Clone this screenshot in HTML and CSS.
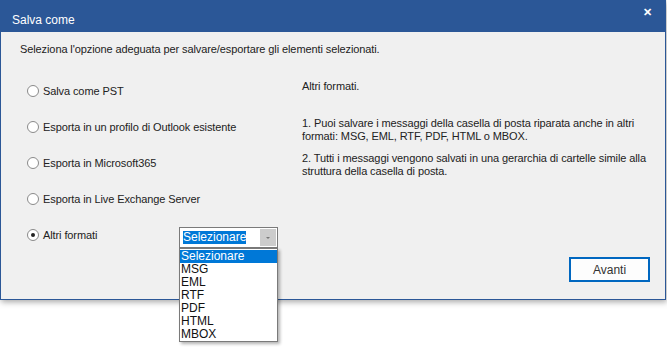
FILE: index.html
```html
<!DOCTYPE html>
<html lang="it">
<head>
  <meta charset="UTF-8">
  <title>Salva come</title>
  <link rel="stylesheet" href="styles.css">
</head>
<body>
  <div class="window">
    <div class="titlebar">
      <span class="title">Salva come</span>
      <span class="close">&#x2715;</span>
    </div>

    <div class="content">
      <p class="intro">Seleziona l'opzione adeguata per salvare/esportare gli elementi selezionati.</p>

      <div class="main">
        <div class="options">
          <label class="option"><span class="radio"></span>Salva come PST</label>
          <label class="option"><span class="radio"></span>Esporta in un profilo di Outlook esistente</label>
          <label class="option"><span class="radio"></span>Esporta in Microsoft365</label>
          <label class="option"><span class="radio"></span>Esporta in Live Exchange Server</label>
          <div class="option last">
            <label class="option-label"><span class="radio checked"></span>Altri formati</label>
            <div class="combo">
              <div class="combo-box">
                <span class="combo-text">Selezionare</span>
                <span class="combo-arrow"></span>
              </div>
              <ul class="combo-list">
                <li class="active">Selezionare</li>
                <li>MSG</li>
                <li>EML</li>
                <li>RTF</li>
                <li>PDF</li>
                <li>HTML</li>
                <li>MBOX</li>
              </ul>
            </div>
          </div>
        </div>

        <div class="info">
          <p>Altri formati.</p>
          <p class="gap">1. Puoi salvare i messaggi della casella di posta riparata anche in altri formati: MSG, EML, RTF, PDF, HTML o MBOX.</p>
          <p>2. Tutti i messaggi vengono salvati in una gerarchia di cartelle simile alla struttura della casella di posta.</p>
        </div>
      </div>

      <div class="footer">
        <button class="btn">Avanti</button>
      </div>
    </div>
  </div>
</body>
</html>
```

FILE: styles.css
```css
html, body {
  min-height: 351px;
}

body {
  margin: 0;
  background: #ffffff;
  font-family: "Liberation Sans", Arial, sans-serif;
  font-size: 11px;
  letter-spacing: -0.1px;
  color: #222222;
}

/* Window */
.window {
  width: 664px;
  border: 1px solid #2b5797;
  border-top: none;
  box-shadow: 1px 2px 6px rgba(0, 0, 0, 0.35);
  background: #f0f0f0;
}

.titlebar {
  height: 32px;
  background: #2b5797;
  color: #ffffff;
  display: flex;
  align-items: center;
  justify-content: space-between;
  padding: 0 13px 0 11px;
}

.title {
  font-size: 12px;
  letter-spacing: 0;
  margin-top: 8px;
}

.close {
  font-size: 11px;
  font-weight: bold;
  margin-top: -7px;
}

/* Content */
.content {
  padding: 11px 15px 17px 19px;
}

.intro {
  margin: 0;
  line-height: 13px;
}

.main {
  display: flex;
  margin-top: 28px;
}

.options {
  width: 275px;
  padding-left: 7px;
  display: flex;
  flex-direction: column;
  gap: 22px;
}

.option {
  display: flex;
  align-items: center;
  height: 14px;
}

.option-label {
  display: flex;
  align-items: center;
  width: 152px;
}

.radio {
  width: 10px;
  height: 10px;
  border: 1px solid #8a8a8a;
  border-radius: 50%;
  background: #ffffff;
  margin-right: 4px;
  position: relative;
}

.radio.checked::after {
  content: "";
  position: absolute;
  left: 3px;
  top: 3px;
  width: 4px;
  height: 4px;
  border-radius: 50%;
  background: #222222;
}

/* Combo */
.combo {
  position: relative;
  margin-top: 4px;
}

.combo-box {
  width: 93px;
  height: 19px;
  border: 1px solid #7a7a7a;
  background: #ffffff;
  display: flex;
  align-items: center;
  justify-content: space-between;
  padding: 0 1px 0 3px;
}

.combo-text {
  background: #0078d7;
  color: #ffffff;
  font-size: 12px;
  letter-spacing: 0;
  line-height: 13px;
}

.combo-arrow {
  width: 16px;
  height: 17px;
  background: #cccccc;
  position: relative;
}

.combo-arrow::after {
  content: "";
  position: absolute;
  left: 6px;
  top: 8px;
  border-left: 2px solid transparent;
  border-right: 2px solid transparent;
  border-top: 2px solid #777777;
}

.combo-list {
  position: absolute;
  z-index: 10;
  left: 0;
  top: 21px;
  width: 97px;
  margin: 0;
  padding: 1px 0 0 0;
  list-style: none;
  background: #ffffff;
  border: 1px solid #7a7a7a;
  box-shadow: 2px 2px 3px rgba(0, 0, 0, 0.3);
  font-size: 12px;
  letter-spacing: 0;
  color: #111111;
}

.combo-list li {
  height: 13px;
  line-height: 13px;
  padding-left: 1px;
}

.combo-list li.active {
  background: #0078d7;
  color: #ffffff;
}

/* Info text */
.info {
  width: 345px;
  margin-top: -4px;
}

.info p {
  margin: 0 0 9px 0;
  line-height: 13px;
}

.info p.gap {
  margin-top: 24px;
}

/* Footer */
.footer {
  display: flex;
  justify-content: flex-end;
  margin-top: 15px;
}

.btn {
  width: 81px;
  height: 25px;
  border: 1px solid #0067c0;
  box-shadow: inset 0 0 0 1px #0067c0;
  background: #fdfdfd;
  font-family: "Liberation Sans", Arial, sans-serif;
  font-size: 12px;
  color: #333333;
}
```
